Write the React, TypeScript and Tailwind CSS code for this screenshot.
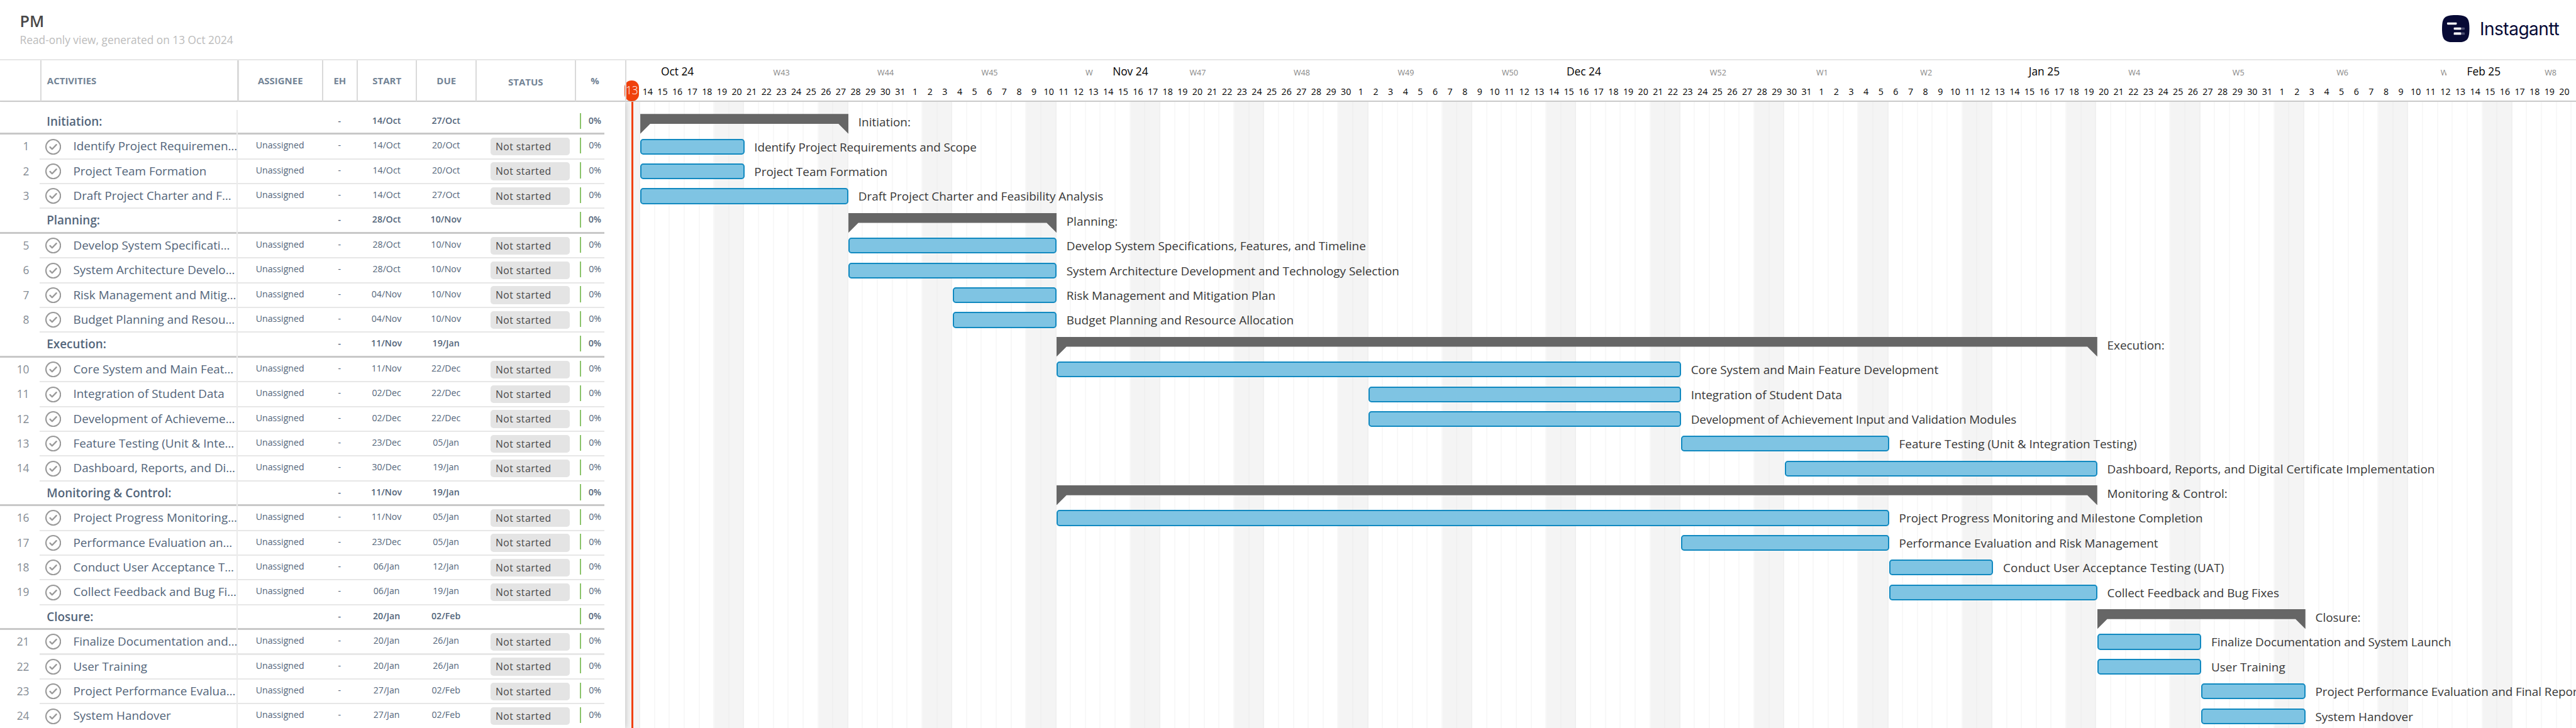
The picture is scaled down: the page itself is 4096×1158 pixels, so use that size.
import React from "react";

type Row = {
  n: number;
  short: string;
  full: string;
  start: string;
  due: string;
  from: number;
  days: number;
  group?: boolean;
};

const G = (n: number, full: string, start: string, due: string, from: number, days: number): Row => ({
  n, short: full, full, start, due, from, days, group: true,
});
const T = (n: number, short: string, full: string, start: string, due: string, from: number, days: number): Row => ({
  n, short, full, start, due, from, days,
});

// `from` counts days after 14 Oct 2024.
const rows: Row[] = [
  G(0, "Initiation:", "14/Oct", "27/Oct", 0, 14),
  T(1, "Identify Project Requiremen…", "Identify Project Requirements and Scope", "14/Oct", "20/Oct", 0, 7),
  T(2, "Project Team Formation", "Project Team Formation", "14/Oct", "20/Oct", 0, 7),
  T(3, "Draft Project Charter and F…", "Draft Project Charter and Feasibility Analysis", "14/Oct", "27/Oct", 0, 14),
  G(4, "Planning:", "28/Oct", "10/Nov", 14, 14),
  T(5, "Develop System Specificati…", "Develop System Specifications, Features, and Timeline", "28/Oct", "10/Nov", 14, 14),
  T(6, "System Architecture Develo…", "System Architecture Development and Technology Selection", "28/Oct", "10/Nov", 14, 14),
  T(7, "Risk Management and Mitig…", "Risk Management and Mitigation Plan", "04/Nov", "10/Nov", 21, 7),
  T(8, "Budget Planning and Resou…", "Budget Planning and Resource Allocation", "04/Nov", "10/Nov", 21, 7),
  G(9, "Execution:", "11/Nov", "19/Jan", 28, 70),
  T(10, "Core System and Main Feat…", "Core System and Main Feature Development", "11/Nov", "22/Dec", 28, 42),
  T(11, "Integration of Student Data", "Integration of Student Data", "02/Dec", "22/Dec", 49, 21),
  T(12, "Development of Achieveme…", "Development of Achievement Input and Validation Modules", "02/Dec", "22/Dec", 49, 21),
  T(13, "Feature Testing (Unit & Inte…", "Feature Testing (Unit & Integration Testing)", "23/Dec", "05/Jan", 70, 14),
  T(14, "Dashboard, Reports, and Di…", "Dashboard, Reports, and Digital Certificate Implementation", "30/Dec", "19/Jan", 77, 21),
  G(15, "Monitoring & Control:", "11/Nov", "19/Jan", 28, 70),
  T(16, "Project Progress Monitoring…", "Project Progress Monitoring and Milestone Completion", "11/Nov", "05/Jan", 28, 56),
  T(17, "Performance Evaluation an…", "Performance Evaluation and Risk Management", "23/Dec", "05/Jan", 70, 14),
  T(18, "Conduct User Acceptance T…", "Conduct User Acceptance Testing (UAT)", "06/Jan", "12/Jan", 84, 7),
  T(19, "Collect Feedback and Bug Fi…", "Collect Feedback and Bug Fixes", "06/Jan", "19/Jan", 84, 14),
  G(20, "Closure:", "20/Jan", "02/Feb", 98, 14),
  T(21, "Finalize Documentation and…", "Finalize Documentation and System Launch", "20/Jan", "26/Jan", 98, 7),
  T(22, "User Training", "User Training", "20/Jan", "26/Jan", 98, 7),
  T(23, "Project Performance Evalua…", "Project Performance Evaluation and Final Report", "27/Jan", "02/Feb", 105, 7),
  T(24, "System Handover", "System Handover", "27/Jan", "02/Feb", 105, 7),
];

// Letter spacing of the bar labels that differ from the default.
const labelTracking: Record<number, string> = {
  1: "tracking-[-0.08px]",
  12: "tracking-[-0.08px]",
  18: "tracking-[0.09px]",
  19: "tracking-[-0.02px]",
  21: "tracking-[-0.04px]",
  23: "tracking-[-0.05px]",
};

const DAY = 15;
// Days drawn from Sunday 13 Oct 2024.
const days = Array.from({ length: 132 }, (_, i) => {
  const d = new Date(Date.UTC(2024, 9, 13 + i));
  return { date: d.getUTCDate(), weekend: d.getUTCDay() === 0 || d.getUTCDay() === 6 };
});
const weeks = ["", "W43", "W44", "W45", "W46", "W47", "W48", "W49", "W50", "", "W52", "W1", "W2", "", "W4", "W5", "W6", "W7", "W8"];
const months = [
  { name: "Oct 24", x: 15 },
  { name: "Nov 24", x: 472 },
  { name: "Dec 24", x: 929.5 },
  { name: "Jan 25", x: 1394 },
  { name: "Feb 25", x: 1837.5 },
];

function Check() {
  return (
    <svg className="h-4 w-4 shrink-0" viewBox="0 0 16 16" fill="none" stroke="#999999">
      <circle cx="8" cy="8" r="7.35" strokeWidth="1.3" />
      <path d="M4.8 8.2 L6.9 10.3 L11.2 5.8" strokeWidth="1.5" strokeLinecap="round" strokeLinejoin="round" />
    </svg>
  );
}

function Logo() {
  return (
    <div className="flex w-[135px] items-center">
      <svg className="h-[27.6px] w-[27.6px] shrink-0" viewBox="0 0 56 56">
        <path d="M28 0C51 0 56 5 56 28S51 56 28 56 0 51 0 28 5 0 28 0Z" fill="#070a35" />
        <rect x="10.2" y="15" width="20" height="4.6" rx="1.5" fill="#fff" />
        <rect x="28" y="25.3" width="18.5" height="4.8" rx="1.5" fill="#4b4d70" />
        <rect x="24" y="25.3" width="15" height="4.8" rx="1.5" fill="#fff" />
        <rect x="28" y="35.5" width="18.5" height="4.8" rx="1.5" fill="#4b4d70" />
        <rect x="24" y="35.5" width="15" height="4.8" rx="1.5" fill="#fff" />
      </svg>
      <span className="ml-[10.3px] pt-[1.5px] font-['Inter'] text-[17.8px] leading-6 tracking-[-0.32px] text-[#070a35]">Instagantt</span>
    </div>
  );
}

function Head({ className, children }: { className: string; children?: React.ReactNode }) {
  return (
    <div className={"flex h-[41px] shrink-0 items-center justify-center border-[#dadada] text-[9.5px] font-bold text-[#738496] " + className}>
      {children}
    </div>
  );
}

function TableRow({ r }: { r: Row }) {
  const small = r.group ? "text-[9px] font-semibold" : "text-[9px]";
  return (
    <div className="relative flex h-[25px] w-[610px] text-[#53657a]">
      <div className={"absolute bottom-0 right-0 " + (r.group ? "left-0 h-[2px] bg-[#c8c8c8]" : "left-10 h-[1.3px] bg-[#e7e7e7]")} />
      <div className="w-[29.5px] shrink-0 text-right text-[11px] leading-[24px] text-[#858c94]">{r.group ? "" : r.n}</div>
      <div className="relative flex w-[210.5px] shrink-0 items-start whitespace-nowrap border-r-[1.3px] border-[#ebebeb] text-[12px] leading-[24px]">
        {r.group ? (
          <span className="pl-[17.6px] font-semibold">{r.short}</span>
        ) : (
          <>
            <span className="ml-4 mt-1 flex"><Check /></span>
            <span className="ml-[12.4px]">{r.short}</span>
          </>
        )}
      </div>
      <div className={"flex leading-[22px] " + small}>
        <div className="w-[85px] text-center">{r.group ? "" : "Unassigned"}</div>
        <div className="w-[35px] text-center">-</div>
        <div className="w-[60px] text-center">{r.start}</div>
        <div className="w-[60px] text-center">{r.due}</div>
        <div className="w-[105px] pl-[15px] pt-[3px]">
          {!r.group && (
            <div className="h-[18px] w-20 rounded-[3px] bg-[#e4e4e4] pl-[5px] text-[10px] leading-[19px] tracking-[0.3px] text-[#484848]">
              Not started
            </div>
          )}
        </div>
        <div className="mt-[3px] h-4 w-[1.3px] bg-[#8cc36b]" />
        <div className="w-[23.7px] pr-[3.3px] text-right">0%</div>
      </div>
    </div>
  );
}

function TimelineRow({ r }: { r: Row }) {
  return (
    <div className="flex h-[25px] items-start whitespace-nowrap pt-1" style={{ paddingLeft: (r.from + 1) * DAY }}>
      {r.group ? (
        <div
          className="h-5 shrink-0 bg-[#666666] [clip-path:polygon(0_0,100%_0,100%_100%,calc(100%-10px)_50%,10px_50%,0_100%)]"
          style={{ width: r.days * DAY }}
        />
      ) : (
        <div className="h-4 shrink-0 rounded-[3px] border-[1.3px] border-[#1189c0] bg-[#7fc4e3]" style={{ width: r.days * DAY }} />
      )}
      <span className={"ml-[10px] text-[12px] leading-[17px] text-[#383838] " + (labelTracking[r.n] ?? "tracking-normal")}>{r.full}</span>
    </div>
  );
}

export default function App() {
  return (
    <div className="h-screen w-screen overflow-hidden bg-white">
      <div className="relative flex h-[735px] w-[2599px] flex-col overflow-hidden bg-white font-['Open_Sans',sans-serif] [zoom:1.576]">
        <header className="flex h-[61px] shrink-0 justify-between border-b-[1.3px] border-[#e6e6e6] pl-5 pt-[9px]">
          <div className="pt-px">
            <h1 className="text-[16px] font-semibold leading-[22px] text-[#484848]">PM</h1>
            <p className="text-[11px] leading-[17px] text-[#bcbcbc]">Read-only view, generated on 13 Oct 2024</p>
          </div>
          <div className="pt-[6px]"><Logo /></div>
        </header>
        <div className="flex h-[42px] shrink-0 border-b-[1.3px] border-[#cacaca]">
          <Head className="w-[42px] border-r-[1.3px]" />
          <Head className="w-[199px] justify-start! border-r-2 pl-[5.5px]">ACTIVITIES</Head>
          <Head className="w-[85px] border-r-[1.3px]">ASSIGNEE</Head>
          <Head className="w-[35px] border-r-[1.3px]">EH</Head>
          <Head className="w-[60px] border-r-[1.3px]">START</Head>
          <Head className="w-[60px] border-r-[1.3px]">DUE</Head>
          <Head className="w-[100px] border-r-[1.3px] pt-[2px]">STATUS</Head>
          <Head className="relative z-10 w-[51px] border-r-[1.3px] pr-[11px]">%</Head>
          <div className="relative -ml-px flex w-[1968px] shrink-0 flex-col">
            <div className="flex h-[25px]">
              {weeks.map((w, i) => (
                <div key={i} className="w-[105px] shrink-0 pt-px text-center text-[8px] leading-[23px] text-[#868686]">{w}</div>
              ))}
            </div>
            {months.map((m) => (
              <div key={m.name} className="absolute top-0 h-[22px] w-[75px] bg-white text-center text-[11px] leading-[22px] text-black" style={{ left: m.x }}>
                {m.name}
              </div>
            ))}
            <div className="flex pt-[1px]">
              {days.slice(0, 131).map((d, i) => (
                <div key={i} className="w-[15px] shrink-0 text-center text-[9px] leading-[12px] text-black">{i === 0 ? "" : d.date}</div>
              ))}
            </div>
            <div className="absolute -left-px top-5 h-[21px] w-[15px] rounded-[7px] bg-[#f0410c] text-center text-[11px] font-light leading-[20px] tracking-[-0.2px] text-white">13</div>
          </div>
        </div>
        <div className="flex min-h-0 flex-1">
          <div className="relative z-10 w-[631px] shrink-0 bg-white pt-2 shadow-[0_0_6px_rgba(0,0,0,0.25)] [clip-path:inset(0_-12px_0_0)]">
            {rows.map((r) => <TableRow key={r.n} r={r} />)}
          </div>
          <div className="relative w-[1968px] overflow-hidden">
            <div className="absolute inset-0 flex">
              {days.map((d, i) => (
                <div key={i} className={"w-[15px] shrink-0 border-r-[1.3px] " + (d.weekend ? "border-[#f0f0f0] bg-[#f4f4f4]" : "border-[#f8f8f8]")} />
              ))}
            </div>
            <div className="relative pt-2">
              {rows.map((r) => <TimelineRow key={r.n} r={r} />)}
            </div>
          </div>
        </div>
        <div className="absolute left-[637px] top-[103px] z-20 h-[632px] w-[2px] bg-[#f0410c]" />
      </div>
    </div>
  );
}
